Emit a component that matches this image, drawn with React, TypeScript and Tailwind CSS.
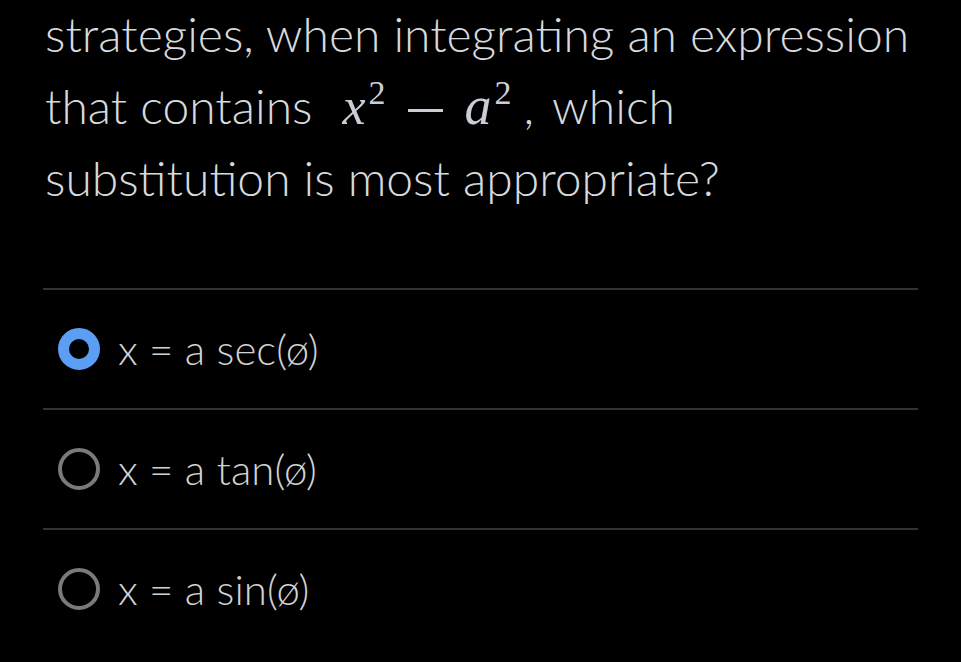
import React from 'react';

const options = [
  { label: 'x = a sec(ø)', selected: true },
  { label: 'x = a tan(ø)', selected: false },
  { label: 'x = a sin(ø)', selected: false },
];

function Radio({ selected }: { selected: boolean }) {
  return selected ? (
    <div className="w-[42px] h-[42px] rounded-full border-[11px] border-[#5b9ef4] shrink-0" />
  ) : (
    <div className="w-[42px] h-[42px] rounded-full border-[4px] border-[#7a7a7a] shrink-0" />
  );
}

export default function App() {
  return (
    <div className="w-[961px] h-[662px] bg-black overflow-hidden font-['Lato_Light','Lato','Noto_Sans',sans-serif] font-light">
      <div className="pl-[43px] pr-[43px]">
        {/* Question */}
        <p className="-mt-[2px] pl-[2px] text-[48px] leading-[72px] text-[#d6dadf] whitespace-nowrap">
          strategies, when integrating an expression
          <br />
          that contains
          <span className="inline-flex items-baseline ml-[30px] mr-[12px] leading-none font-['Liberation_Serif',serif] font-normal text-[#c9ced6]">
            <i className="text-[52px]">x</i>
            <sup className="relative -top-[20px] text-[34px] ml-[3px] align-baseline">2</sup>
            <span className="inline-block self-center mt-[8px] mx-[22px] w-[35px] h-[3px] bg-[#c9ced6]" />
            <i className="text-[54px]">a</i>
            <sup className="relative -top-[20px] text-[34px] ml-[3px] align-baseline">2</sup>
          </span>
          ,<span className="ml-[6px]"> which</span>
          <br />
          substitution is most appropriate?
        </p>

        {/* Options */}
        <div className="mt-[74px]">
          {options.map((o) => (
            <div key={o.label}>
              <div className="h-[2px] bg-[#333333]" />
              <div className="h-[118px] flex items-center gap-[18px] pl-[15px]">
                <Radio selected={o.selected} />
                <span className="text-[42px] text-[#d2d2d2] leading-none">{o.label}</span>
              </div>
            </div>
          ))}
        </div>
      </div>
    </div>
  );
}
